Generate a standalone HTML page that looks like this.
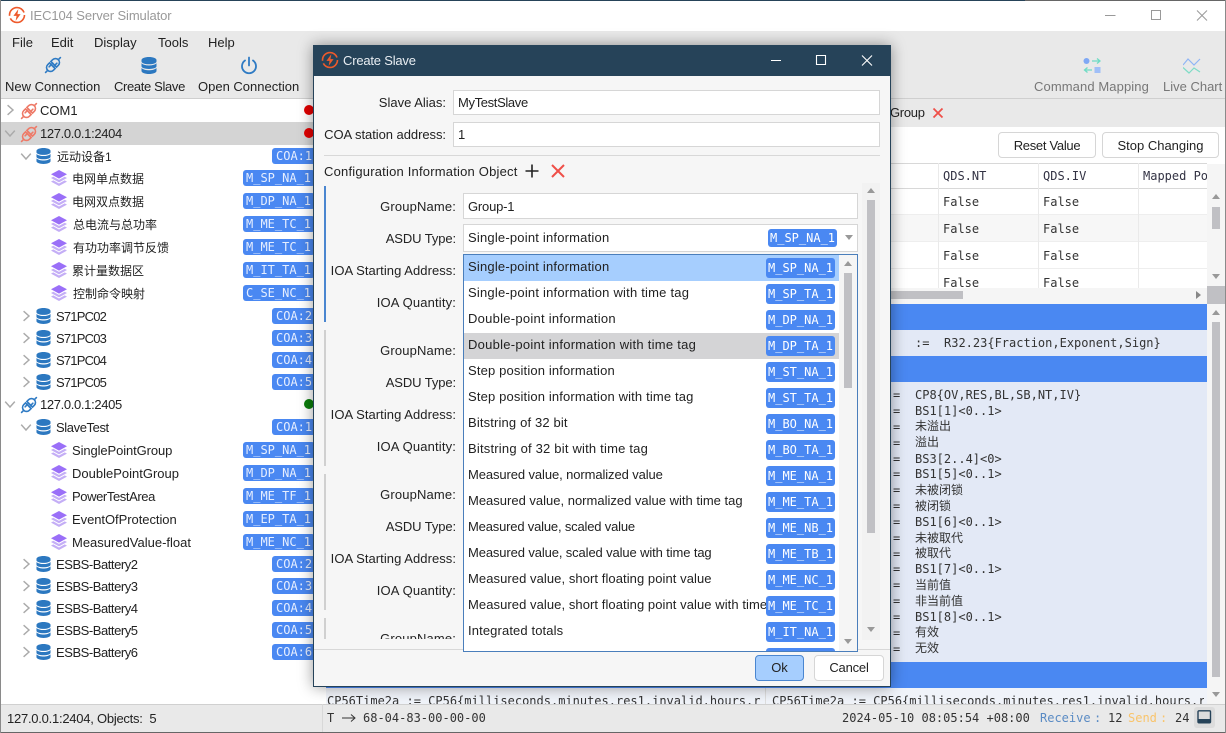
<!DOCTYPE html>
<html><head><meta charset="utf-8"><style>
html,body{margin:0;padding:0}
body{width:1226px;height:733px;overflow:hidden;position:relative;background:#fff;font:13px "Liberation Sans","Noto Sans CJK SC",sans-serif;color:#222}
div,span,svg{position:absolute}
.t{white-space:nowrap;line-height:16px;height:16px}
.n{margin-top:1px}
.gn{letter-spacing:.15px}.at{letter-spacing:-.1px}.ia{letter-spacing:.05px}
.m{font-family:"DejaVu Sans Mono","Noto Sans CJK SC",monospace;font-size:12px;white-space:nowrap;line-height:16px;height:16px;color:#333}
.b{background:#4a88f2;color:#e6eeff;font-family:"DejaVu Sans Mono",monospace;font-size:12px;line-height:16px;height:16px;border-radius:3px;white-space:nowrap;padding-left:3px;box-sizing:border-box}
.g{width:72px;left:243px}.c{width:45px;left:272px;padding-left:4px}
.r{right:780px;text-align:right}
.pb{left:766px;width:69px;height:20px;line-height:20px;padding-left:2px;color:#fff}
.ti{left:468px}
.inp{background:#fff;border:1px solid #d6d6d6;box-sizing:border-box}
.ch{width:14px;height:14px}
</style></head><body>
<svg width="0" height="0" style="position:absolute"><defs>
<symbol id="db" viewBox="0 0 16 17"><path d="M0.500 3C0.500 1.300 4 0 8 0S15.500 1.300 15.500 3V4.500C15.500 6.200 12 7.300 8 7.300S.5 6.200.5 4.500z" fill="#2c78c0"/><path d="M.5 6.300C2 7.800 5 8.500 8 8.500S14 7.800 15.500 6.300V9.300C15.500 11 12 12 8 12S.5 11 .5 9.300z" fill="#2c78c0"/><path d="M.5 11C2 12.500 5 13.300 8 13.300S14 12.500 15.500 11V14C15.500 15.700 12 17 8 17S.5 15.700.5 14z" fill="#2c78c0"/></symbol>
<symbol id="ly" viewBox="0 0 16 16"><path d="M8 0L16 4.300L8 8.600L0 4.300z" fill="#9a6ff8"/><path d="M2.300 6.800L0 8L8 12.400L16 8L13.700 6.800L8 9.900z" fill="#c4aef6"/><path d="M2.300 10.400L0 11.600L8 16L16 11.600L13.700 10.400L8 13.500z" fill="#c4aef6"/></symbol>
<symbol id="lk" viewBox="0 0 20 20"><g transform="rotate(-45 10 10)" fill="none" stroke="currentColor" stroke-width="1.600" stroke-linecap="round"><path d="M9 6H6.500A4 4 0 0 0 6.500 14H9z"/><path d="M11 6H13.500A4 4 0 0 1 13.500 14H11z"/><path d="M2.500 10H-.5M17.500 10H20.500M6 8.500H11M9 11.500H14"/></g></symbol>
<symbol id="cr" viewBox="0 0 10 10"><path d="M3 1L7.500 5L3 9" fill="none" stroke="#aaa" stroke-width="1.200"/></symbol>
<symbol id="cd" viewBox="0 0 10 10"><path d="M1 3L5 7.500L9 3" fill="none" stroke="#aaa" stroke-width="1.200"/></symbol>
<symbol id="bolt" viewBox="0 0 20 20"><circle cx="10" cy="10" r="8.300" fill="none" stroke="#ee5a2b" stroke-width="1.800" stroke-dasharray="22 3 24 3"/><path d="M11.500 3.500L6 11H9.500L8.500 16.500L14 9H10.500z" fill="#ee5a2b"/></symbol>
</defs></svg>

<!-- frame -->
<div style="left:0;top:0;width:1025px;height:1px;background:#264359"></div>
<div style="left:1025px;top:0;width:201px;height:1px;background:#666"></div>
<svg style="left:8px;top:6px" width="18" height="18"><use href="#bolt"/></svg>
<div class="t" style="left:30px;top:8px;color:#999;letter-spacing:-.1px">IEC104 Server Simulator</div>
<svg style="left:1100px;top:5px" width="120" height="20" fill="none" stroke="#999" stroke-width="1"><path d="M5 10.500H15.500M51.500 5.500H60.500V14.500H51.500zM97 5.500L107 15.500M107 5.500L97 15.500"/></svg>
<div style="left:1px;top:31px;width:1224px;height:67px;background:#e9e9e9"></div>
<div class="t" style="left:12px;top:35px">File</div>
<div class="t" style="left:51px;top:35px">Edit</div>
<div class="t" style="left:94px;top:35px">Display</div>
<div class="t" style="left:158px;top:35px">Tools</div>
<div class="t" style="left:208px;top:35px">Help</div>
<svg style="left:43px;top:55px;color:#2f7bc4" width="20" height="20"><use href="#lk"/></svg>
<svg style="left:141px;top:57px" width="16" height="17"><use href="#db"/></svg>
<svg style="left:239px;top:56px" width="20" height="20" fill="none" stroke="#2f7bc4" stroke-width="1.800" stroke-linecap="round"><path d="M10 1.500V9.500"/><path d="M6 4.500A7 7 0 1 0 14 4.500"/></svg>
<div class="t" style="left:5px;top:79px">New Connection</div>
<div class="t" style="left:114px;top:79px;letter-spacing:-.35px">Create Slave</div>
<div class="t" style="left:198px;top:79px">Open Connection</div>
<svg style="left:1083px;top:57px" width="18" height="18"><circle cx="3.500" cy="4" r="3" fill="#7fa8f5"/><rect x="11.500" y="10" width="6" height="6" fill="#a0bff7"/><path d="M9 4H16.500M14 1.500L17 4L14 6.500M9 13H2M4.500 10.500L1.500 13L4.500 15.500" fill="none" stroke="#6fdcc4" stroke-width="1.300"/></svg>
<svg style="left:1183px;top:58px" width="18" height="16" fill="none" stroke-width="1.200"><path d="M0 7L5 1L11 7L17 1" stroke="#8fb5f5"/><path d="M0 9.500L6 15L11 10L17 14" stroke="#7fdcc6"/></svg>
<div class="t" style="left:1034px;top:79px;color:#777;letter-spacing:.1px">Command Mapping</div>
<div class="t" style="left:1163px;top:79px;color:#777">Live Chart</div>
<div style="left:1px;top:98px;width:1224px;height:1px;background:#cfcfcf"></div>

<!-- tree -->
<div style="left:1px;top:122px;width:320px;height:23px;background:#d4d4d4"></div>
<svg style="left:4px;top:104px" width="12" height="12"><use href="#cr"/></svg>
<svg style="left:4px;top:127px" width="12" height="12"><use href="#cd"/></svg>
<svg style="left:19px;top:101px;color:#ee7a68" width="20" height="20"><use href="#lk"/></svg>
<div class="t n" style="left:40px;top:102px">COM1</div>
<svg style="left:19px;top:124px;color:#ee7a68" width="20" height="20"><use href="#lk"/></svg>
<div class="t n" style="left:40px;top:125px;letter-spacing:-.35px">127.0.0.1:2404</div>
<div style="left:304px;top:105px;width:10px;height:10px;border-radius:50%;background:#e30000"></div>
<div style="left:304px;top:128px;width:10px;height:10px;border-radius:50%;background:#e30000"></div>
<div style="left:304px;top:399px;width:10px;height:10px;border-radius:50%;background:#0a7d0a"></div>

<svg style="left:20px;top:150px" width="12" height="12"><use href="#cd"/></svg>
<svg style="left:36px;top:148px" width="15" height="16"><use href="#db"/></svg>
<div class="t n" style="left:57px;top:148px;font-size:12px">远动设备1</div><div class="b c" style="top:148px">COA:1</div>

<svg style="left:51px;top:170px" width="16" height="16"><use href="#ly"/></svg><div class="t n" style="left:72px;top:170px;font-size:12px">电网单点数据</div><div class="b g" style="top:170px">M_SP_NA_1</div>
<svg style="left:51px;top:193px" width="16" height="16"><use href="#ly"/></svg><div class="t n" style="left:72px;top:193px;font-size:12px">电网双点数据</div><div class="b g" style="top:193px">M_DP_NA_1</div>
<svg style="left:51px;top:216px" width="16" height="16"><use href="#ly"/></svg><div class="t n" style="left:73px;top:216px;font-size:12px">总电流与总功率</div><div class="b g" style="top:216px">M_ME_TC_1</div>
<svg style="left:51px;top:239px" width="16" height="16"><use href="#ly"/></svg><div class="t n" style="left:73px;top:239px;font-size:12px">有功功率调节反馈</div><div class="b g" style="top:239px">M_ME_TC_1</div>
<svg style="left:51px;top:262px" width="16" height="16"><use href="#ly"/></svg><div class="t n" style="left:72px;top:262px;font-size:12px">累计量数据区</div><div class="b g" style="top:262px">M_IT_TA_1</div>
<svg style="left:51px;top:285px" width="16" height="16"><use href="#ly"/></svg><div class="t n" style="left:73px;top:285px;font-size:12px">控制命令映射</div><div class="b g" style="top:285px">C_SE_NC_1</div>

<svg style="left:20px;top:310px" width="12" height="12"><use href="#cr"/></svg><svg style="left:36px;top:308px" width="15" height="16"><use href="#db"/></svg><div class="t n" style="left:56px;top:308px;letter-spacing:-.8px">S71PC02</div><div class="b c" style="top:308px">COA:2</div>
<svg style="left:20px;top:332px" width="12" height="12"><use href="#cr"/></svg><svg style="left:36px;top:330px" width="15" height="16"><use href="#db"/></svg><div class="t n" style="left:56px;top:330px;letter-spacing:-.8px">S71PC03</div><div class="b c" style="top:330px">COA:3</div>
<svg style="left:20px;top:354px" width="12" height="12"><use href="#cr"/></svg><svg style="left:36px;top:352px" width="15" height="16"><use href="#db"/></svg><div class="t n" style="left:56px;top:352px;letter-spacing:-.8px">S71PC04</div><div class="b c" style="top:352px">COA:4</div>
<svg style="left:20px;top:376px" width="12" height="12"><use href="#cr"/></svg><svg style="left:36px;top:374px" width="15" height="16"><use href="#db"/></svg><div class="t n" style="left:56px;top:374px;letter-spacing:-.8px">S71PC05</div><div class="b c" style="top:374px">COA:5</div>

<svg style="left:4px;top:398px" width="12" height="12"><use href="#cd"/></svg>
<svg style="left:19px;top:395px;color:#2f7bc4" width="20" height="20"><use href="#lk"/></svg>
<div class="t n" style="left:40px;top:396px;letter-spacing:-.35px">127.0.0.1:2405</div>

<svg style="left:20px;top:421px" width="12" height="12"><use href="#cd"/></svg><svg style="left:36px;top:419px" width="15" height="16"><use href="#db"/></svg><div class="t n" style="left:56px;top:419px;letter-spacing:-.4px">SlaveTest</div><div class="b c" style="top:419px">COA:1</div>

<svg style="left:51px;top:442px" width="16" height="16"><use href="#ly"/></svg><div class="t n" style="left:72px;top:442px;letter-spacing:-.1px">SinglePointGroup</div><div class="b g" style="top:442px">M_SP_NA_1</div>
<svg style="left:51px;top:465px" width="16" height="16"><use href="#ly"/></svg><div class="t n" style="left:72px;top:465px">DoublePointGroup</div><div class="b g" style="top:465px">M_DP_NA_1</div>
<svg style="left:51px;top:488px" width="16" height="16"><use href="#ly"/></svg><div class="t n" style="left:72px;top:488px;letter-spacing:-.4px">PowerTestArea</div><div class="b g" style="top:488px">M_ME_TF_1</div>
<svg style="left:51px;top:511px" width="16" height="16"><use href="#ly"/></svg><div class="t n" style="left:72px;top:511px;letter-spacing:-.05px">EventOfProtection</div><div class="b g" style="top:511px">M_EP_TA_1</div>
<svg style="left:51px;top:534px" width="16" height="16"><use href="#ly"/></svg><div class="t n" style="left:72px;top:534px">MeasuredValue-float</div><div class="b g" style="top:534px">M_ME_NC_1</div>

<svg style="left:20px;top:558px" width="12" height="12"><use href="#cr"/></svg><svg style="left:36px;top:556px" width="15" height="16"><use href="#db"/></svg><div class="t n" style="left:56px;top:556px;letter-spacing:-.45px">ESBS-Battery2</div><div class="b c" style="top:556px">COA:2</div>
<svg style="left:20px;top:580px" width="12" height="12"><use href="#cr"/></svg><svg style="left:36px;top:578px" width="15" height="16"><use href="#db"/></svg><div class="t n" style="left:56px;top:578px;letter-spacing:-.45px">ESBS-Battery3</div><div class="b c" style="top:578px">COA:3</div>
<svg style="left:20px;top:602px" width="12" height="12"><use href="#cr"/></svg><svg style="left:36px;top:600px" width="15" height="16"><use href="#db"/></svg><div class="t n" style="left:56px;top:600px;letter-spacing:-.45px">ESBS-Battery4</div><div class="b c" style="top:600px">COA:4</div>
<svg style="left:20px;top:624px" width="12" height="12"><use href="#cr"/></svg><svg style="left:36px;top:622px" width="15" height="16"><use href="#db"/></svg><div class="t n" style="left:56px;top:622px;letter-spacing:-.45px">ESBS-Battery5</div><div class="b c" style="top:622px">COA:5</div>
<svg style="left:20px;top:646px" width="12" height="12"><use href="#cr"/></svg><svg style="left:36px;top:644px" width="15" height="16"><use href="#db"/></svg><div class="t n" style="left:56px;top:644px;letter-spacing:-.45px">ESBS-Battery6</div><div class="b c" style="top:644px">COA:6</div>

<!-- right side behind dialog -->
<div style="left:326px;top:99px;width:899px;height:28px;background:#e9e9e9"></div>
<div class="t" style="left:890px;top:105px;letter-spacing:-.3px">Group</div>
<svg style="left:932px;top:107px" width="12" height="12" fill="none" stroke="#ef4f48" stroke-width="1.800"><path d="M1.500 1.500L10.500 10.500M10.500 1.500L1.500 10.500"/></svg>
<div class="t" style="left:998px;top:132px;width:98px;height:26px;line-height:26px;text-align:center;background:#fff;border:1px solid #d6d6d6;border-radius:4px;box-sizing:border-box;letter-spacing:-.3px">Reset Value</div>
<div class="t" style="left:1102px;top:132px;width:117px;height:26px;line-height:26px;text-align:center;background:#fff;border:1px solid #d6d6d6;border-radius:4px;box-sizing:border-box">Stop Changing</div>
<div style="left:326px;top:163px;width:881px;height:1px;background:#d8d8d8"></div>
<div style="left:326px;top:188px;width:881px;height:1px;background:#d8d8d8"></div>
<div style="left:326px;top:215px;width:881px;height:27px;background:#f7f7f7"></div>
<div style="left:326px;top:214px;width:881px;height:1px;background:#eee"></div>
<div style="left:326px;top:241px;width:881px;height:1px;background:#eee"></div>
<div style="left:326px;top:268px;width:881px;height:1px;background:#eee"></div>
<div style="left:938px;top:163px;width:1px;height:125px;background:#eaeaea"></div>
<div style="left:1038px;top:163px;width:1px;height:125px;background:#eaeaea"></div>
<div style="left:1138px;top:163px;width:1px;height:125px;background:#eaeaea"></div>
<div class="m" style="left:943px;top:168px;color:#334">QDS.NT</div>
<div class="m" style="left:1043px;top:168px;color:#334">QDS.IV</div>
<div class="m" style="left:1143px;top:168px;color:#334">Mapped Po</div>
<div class="m" style="left:943px;top:194px">False</div><div class="m" style="left:1043px;top:194px">False</div>
<div class="m" style="left:943px;top:221px">False</div><div class="m" style="left:1043px;top:221px">False</div>
<div class="m" style="left:943px;top:248px">False</div><div class="m" style="left:1043px;top:248px">False</div>
<div style="left:326px;top:275px;width:881px;height:13px;overflow:hidden"><div class="m" style="left:617px;top:0">False</div><div class="m" style="left:717px;top:0">False</div></div>
<div style="left:1207px;top:164px;width:18px;height:122px;background:#f5f5f5"></div>
<div style="left:1212px;top:207px;width:8px;height:22px;background:#c0c0c4"></div>
<div style="left:1212px;top:194px;border:4px solid transparent;border-bottom:5px solid #999;border-top:0"></div>
<div style="left:1212px;top:274px;border:4px solid transparent;border-top:5px solid #999;border-bottom:0"></div>
<div style="left:326px;top:288px;width:881px;height:16px;background:#f5f5f5"></div>
<div style="left:890px;top:291px;width:73px;height:8px;background:#c0c0c4"></div>
<div style="left:1196px;top:291px;border:4px solid transparent;border-left:5px solid #888;border-right:0"></div>
<div style="left:1207px;top:286px;width:18px;height:18px;background:#c0c0c4"></div>

<div style="left:326px;top:304px;width:881px;height:384px;background:#e3e9f6"></div>
<div style="left:326px;top:304px;width:881px;height:26px;background:#4a88f2"></div>
<div style="left:326px;top:356px;width:881px;height:26px;background:#4a88f2"></div>
<div style="left:326px;top:662px;width:881px;height:26px;background:#4a88f2"></div>
<div style="left:1207px;top:304px;width:18px;height:400px;background:#f5f5f5"></div>
<div style="left:1212px;top:322px;width:8px;height:355px;background:#c0c0c4"></div>
<div style="left:1212px;top:310px;border:4px solid transparent;border-bottom:5px solid #999;border-top:0"></div>
<div style="left:1212px;top:692px;border:4px solid transparent;border-top:5px solid #999;border-bottom:0"></div>
<div class="m" style="left:915px;top:335px">:=</div><div class="m" style="left:944px;top:335px">R32.23{Fraction,Exponent,Sign}</div>
<div class="m" style="left:893px;top:387px">=</div><div class="m" style="left:915px;top:387px">CP8{OV,RES,BL,SB,NT,IV}</div>
<div class="m" style="left:893px;top:403px">=</div><div class="m" style="left:915px;top:403px">BS1[1]&lt;0..1&gt;</div>
<div class="m" style="left:893px;top:419px">=</div><div class="m" style="left:915px;top:418px">未溢出</div>
<div class="m" style="left:893px;top:435px">=</div><div class="m" style="left:915px;top:434px">溢出</div>
<div class="m" style="left:893px;top:451px">=</div><div class="m" style="left:915px;top:451px">BS3[2..4]&lt;0&gt;</div>
<div class="m" style="left:893px;top:466px">=</div><div class="m" style="left:915px;top:466px">BS1[5]&lt;0..1&gt;</div>
<div class="m" style="left:893px;top:482px">=</div><div class="m" style="left:915px;top:482px">未被闭锁</div>
<div class="m" style="left:893px;top:498px">=</div><div class="m" style="left:915px;top:498px">被闭锁</div>
<div class="m" style="left:893px;top:514px">=</div><div class="m" style="left:915px;top:514px">BS1[6]&lt;0..1&gt;</div>
<div class="m" style="left:893px;top:530px">=</div><div class="m" style="left:915px;top:530px">未被取代</div>
<div class="m" style="left:893px;top:546px">=</div><div class="m" style="left:915px;top:545px">被取代</div>
<div class="m" style="left:893px;top:561px">=</div><div class="m" style="left:915px;top:561px">BS1[7]&lt;0..1&gt;</div>
<div class="m" style="left:893px;top:577px">=</div><div class="m" style="left:915px;top:577px">当前值</div>
<div class="m" style="left:893px;top:593px">=</div><div class="m" style="left:915px;top:593px">非当前值</div>
<div class="m" style="left:893px;top:609px">=</div><div class="m" style="left:915px;top:609px">BS1[8]&lt;0..1&gt;</div>
<div class="m" style="left:893px;top:625px">=</div><div class="m" style="left:915px;top:624px">有效</div>
<div class="m" style="left:893px;top:641px">=</div><div class="m" style="left:915px;top:640px">无效</div>

<div style="left:326px;top:688px;width:881px;height:16px;background:#f0f3f9;overflow:hidden">
<div class="m" style="left:1px;top:5px;width:437px;overflow:hidden">CP56Time2a := CP56{milliseconds.minutes.res1.invalid.hours.r</div>
<div style="left:439px;top:0;width:1px;height:16px;background:#ddd"></div>
<div class="m" style="left:446px;top:5px;width:432px;overflow:hidden">CP56Time2a := CP56{milliseconds.minutes.res1.invalid.hours.r</div>
</div>

<!-- status -->
<div style="left:1px;top:704px;width:1224px;height:28px;background:#e9e9e9"></div>
<div style="left:1px;top:704px;width:1224px;height:1px;background:#d0d0d0"></div>
<div style="left:322px;top:704px;width:1px;height:28px;background:#d8d8d8"></div>
<div style="left:0;top:732px;width:1226px;height:1px;background:#666"></div>
<div class="t" style="left:7px;top:711px;letter-spacing:-.25px">127.0.0.1:2404, Objects:&nbsp; 5</div>
<div class="m" style="left:327px;top:710px">T</div>
<svg style="left:342px;top:712px" width="14" height="12" fill="none" stroke="#333" stroke-width="1"><path d="M0 6H13M9 2.500L13 6L9 9.500"/></svg>
<div class="m" style="left:363px;top:710px">68-04-83-00-00-00</div>
<div class="m" style="left:842px;top:710px">2024-05-10 08:05:54 +08:00</div>
<div class="m" style="left:1040px;top:710px;color:#5a8bc4">Receive</div><div class="m" style="left:1094px;top:710px;color:#5a8bc4">:</div>
<div class="m" style="left:1108px;top:710px">12</div>
<div class="m" style="left:1128px;top:710px;color:#f9c46b">Send</div><div class="m" style="left:1160px;top:710px;color:#f9c46b">:</div>
<div class="m" style="left:1175px;top:710px">24</div>
<div style="left:1194px;top:707px;width:21px;height:21px;background:#dcdcdc;border-radius:3px"></div>
<svg style="left:1197px;top:710px" width="15" height="14"><rect x="1" y=".8" width="12.500" height="12" rx="1" fill="none" stroke="#264359" stroke-width="1.400"/><rect x="1" y="9" width="12.500" height="4" fill="#264359"/></svg>
<div style="left:0;top:0;width:1px;height:733px;background:#8a8a8a"></div>
<div style="left:1225px;top:0;width:1px;height:733px;background:#8a8a8a"></div>

<!-- dialog -->
<div style="left:313px;top:45px;width:578px;height:642px;background:#f6f6f6;border:1px solid #264359;box-sizing:border-box;box-shadow:0 0 14px rgba(0,0,0,.4)"></div>
<div style="left:314px;top:46px;width:576px;height:30px;background:#264359"></div>
<svg style="left:321px;top:51px" width="18" height="18"><use href="#bolt"/></svg>
<div class="t" style="left:343px;top:53px;color:#e8edf2;letter-spacing:-.2px">Create Slave</div>
<svg style="left:765px;top:50px" width="115" height="20" fill="none" stroke="#fff" stroke-width="1.100"><path d="M6 10.500H16M51.500 5.500H60.500V14.500H51.500zM97 5.500L107 15.500M107 5.500L97 15.500"/></svg>

<div class="t r" style="top:95px">Slave Alias:</div>
<div class="t r" style="top:127px;letter-spacing:-.05px">COA station address:</div>
<div class="inp t" style="left:453px;top:90px;width:427px;height:25px;line-height:23px;padding-left:4px;letter-spacing:-.35px">MyTestSlave</div>
<div class="inp t" style="left:453px;top:122px;width:427px;height:25px;line-height:23px;padding-left:4px">1</div>
<div style="left:324px;top:155px;width:556px;height:1px;background:#d8d8d8"></div>
<div class="t" style="left:324px;top:164px;letter-spacing:.2px">Configuration Information Object</div>
<svg style="left:525px;top:164px" width="14" height="14" stroke="#222" stroke-width="1.600"><path d="M7 .5V13.500M.5 7H13.500"/></svg>
<svg style="left:551px;top:164px" width="14" height="14" stroke="#ef4f48" stroke-width="2"><path d="M1 1L13 13M13 1L1 13"/></svg>

<div style="left:324px;top:186px;width:2px;height:136px;background:#4a86d0"></div>
<div style="left:324px;top:330px;width:2px;height:136px;background:#d0d0d0"></div>
<div style="left:324px;top:474px;width:2px;height:136px;background:#d0d0d0"></div>
<div style="left:324px;top:618px;width:2px;height:21px;background:#d0d0d0"></div>

<div class="t gn" style="right:770px;top:199px">GroupName:</div>
<div class="t at" style="right:770px;top:231px">ASDU Type:</div>
<div class="t ia" style="right:770px;top:263px">IOA Starting Address:</div>
<div class="t" style="right:770px;top:295px;letter-spacing:.15px">IOA Quantity:</div>
<div class="t gn" style="right:770px;top:343px">GroupName:</div>
<div class="t at" style="right:770px;top:375px">ASDU Type:</div>
<div class="t ia" style="right:770px;top:407px">IOA Starting Address:</div>
<div class="t" style="right:770px;top:439px;letter-spacing:.15px">IOA Quantity:</div>
<div class="t gn" style="right:770px;top:487px">GroupName:</div>
<div class="t at" style="right:770px;top:519px">ASDU Type:</div>
<div class="t ia" style="right:770px;top:551px">IOA Starting Address:</div>
<div class="t" style="right:770px;top:583px;letter-spacing:.15px">IOA Quantity:</div>
<div style="left:324px;top:625px;width:134px;height:14px;overflow:hidden"><div class="t gn" style="right:2px;top:6px">GroupName:</div></div>

<div class="inp t" style="left:463px;top:193px;width:395px;height:26px;line-height:25px;padding-left:4px;letter-spacing:-.2px">Group-1</div>
<div class="inp" style="left:463px;top:224px;width:395px;height:28px"></div>
<div class="t" style="left:468px;top:230px;letter-spacing:.2px">Single-point information</div>
<div class="b" style="left:768px;top:229px;width:69px;height:18px;line-height:18px;padding-left:2px;color:#fff">M_SP_NA_1</div>
<div style="left:845px;top:235px;border:4px solid transparent;border-top:5px solid #999;border-bottom:0"></div>

<div style="left:862px;top:183px;width:18px;height:457px;background:#f2f2f2"></div>
<div style="left:867px;top:200px;width:8px;height:333px;background:#c0c0c4"></div>
<div style="left:867px;top:188px;border:4px solid transparent;border-bottom:5px solid #999;border-top:0"></div>
<div style="left:867px;top:627px;border:4px solid transparent;border-top:5px solid #999;border-bottom:0"></div>

<!-- popup -->
<div style="left:463px;top:254px;width:395px;height:398px;background:#fff;border:1px solid #4a7ebb;box-sizing:border-box;overflow:hidden"></div>
<div style="left:464px;top:255px;width:375px;height:26px;background:#a6cefe"></div>
<div style="left:464px;top:333px;width:375px;height:26px;background:#d4d4d6"></div>
<div style="left:839px;top:255px;width:18px;height:396px;background:#f5f5f5"></div>
<div style="left:844px;top:273px;width:8px;height:115px;background:#c0c0c4"></div>
<div style="left:844px;top:261px;border:4px solid transparent;border-bottom:5px solid #999;border-top:0"></div>
<div style="left:844px;top:639px;border:4px solid transparent;border-top:5px solid #999;border-bottom:0"></div>

<div class="t ti" style="top:259px;letter-spacing:.2px">Single-point information</div>
<div class="t ti" style="top:285px;letter-spacing:.21px">Single-point information with time tag</div>
<div class="t ti" style="top:311px;letter-spacing:.26px">Double-point information</div>
<div class="t ti" style="top:337px;letter-spacing:.26px">Double-point information with time tag</div>
<div class="t ti" style="top:363px;letter-spacing:.15px">Step position information</div>
<div class="t ti" style="top:389px;letter-spacing:.15px">Step position information with time tag</div>
<div class="t ti" style="top:415px;letter-spacing:.15px">Bitstring of 32 bit</div>
<div class="t ti" style="top:441px;letter-spacing:.2px">Bitstring of 32 bit with time tag</div>
<div class="t ti" style="top:467px;letter-spacing:-.1px">Measured value, normalized value</div>
<div class="t ti" style="top:493px">Measured value, normalized value with time tag</div>
<div class="t ti" style="top:519px;letter-spacing:-.18px">Measured value, scaled value</div>
<div class="t ti" style="top:545px;letter-spacing:-.12px">Measured value, scaled value with time tag</div>
<div class="t ti" style="top:571px;letter-spacing:.07px">Measured value, short floating point value</div>
<div class="t ti" style="top:597px;letter-spacing:.07px">Measured value, short floating point value with time tag</div>
<div class="t ti" style="top:623px;letter-spacing:.12px">Integrated totals</div>

<div class="b pb" style="top:258px">M_SP_NA_1</div>
<div class="b pb" style="top:284px">M_SP_TA_1</div>
<div class="b pb" style="top:310px">M_DP_NA_1</div>
<div class="b pb" style="top:336px">M_DP_TA_1</div>
<div class="b pb" style="top:362px">M_ST_NA_1</div>
<div class="b pb" style="top:388px">M_ST_TA_1</div>
<div class="b pb" style="top:414px">M_BO_NA_1</div>
<div class="b pb" style="top:440px">M_BO_TA_1</div>
<div class="b pb" style="top:466px">M_ME_NA_1</div>
<div class="b pb" style="top:492px">M_ME_TA_1</div>
<div class="b pb" style="top:518px">M_ME_NB_1</div>
<div class="b pb" style="top:544px">M_ME_TB_1</div>
<div class="b pb" style="top:570px">M_ME_NC_1</div>
<div class="b pb" style="top:596px">M_ME_TC_1</div>
<div class="b pb" style="top:622px">M_IT_NA_1</div>
<div style="left:766px;top:648px;width:69px;height:3px;background:#4a88f2;border-radius:3px 3px 0 0"></div>
<div style="left:463px;top:651px;width:395px;height:1px;background:#4a7ebb"></div>

<div style="left:314px;top:649px;width:149px;height:1px;background:#d8d8d8"></div>
<div style="left:858px;top:649px;width:32px;height:1px;background:#d8d8d8"></div>
<div class="t" style="left:755px;top:655px;width:49px;height:26px;line-height:24px;text-align:center;background:#a6cefe;border:1px solid #4a86d0;border-radius:4px;box-sizing:border-box">Ok</div>
<div class="t" style="left:814px;top:655px;width:70px;height:26px;line-height:24px;text-align:center;background:#fff;border:1px solid #d6d6d6;border-radius:4px;box-sizing:border-box;letter-spacing:-.2px">Cancel</div>
</body></html>
